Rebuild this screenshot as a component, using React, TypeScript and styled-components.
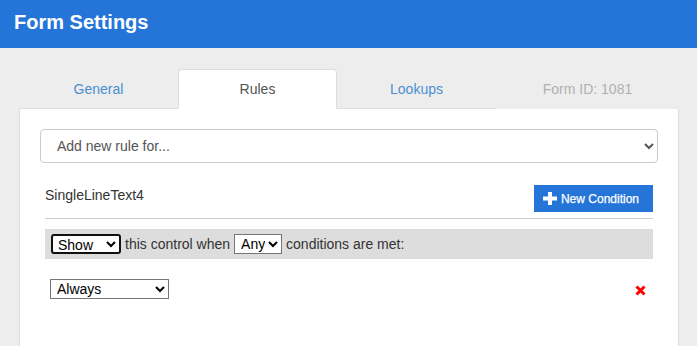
import React from 'react';
import styled, { createGlobalStyle, css } from 'styled-components';

const GlobalStyle = createGlobalStyle`
  html, body {
    margin: 0;
    padding: 0;
    background: #ededed;
    font-family: "Liberation Sans", Arial, sans-serif;
  }
  * { box-sizing: border-box; }
`;

function App() {
  return (
    <>
      <GlobalStyle />
      <Page>
        <Header>Form Settings</Header>
        <Main>
          <TabList>
            <Tab>General</Tab>
            <Tab active>Rules</Tab>
            <Tab>Lookups</Tab>
            <FormId>Form ID: 1081</FormId>
          </TabList>
          <Panel>
            <RuleSelect defaultValue="">
              <option value="">Add new rule for...</option>
            </RuleSelect>
            <Rule>
              <RuleHead>
                <FieldName>SingleLineText4</FieldName>
                <NewButton>
                  <svg width="14" height="13" viewBox="0 0 14 13">
                    <path d="M5 0h4v4.5h5v4H9V13H5V8.5H0v-4h5z" fill="#fff" />
                  </svg>
                  New Condition
                </NewButton>
              </RuleHead>
              <Divider />
              <ConditionBar>
                <SmallSelect width={70} focused defaultValue="Show">
                  <option>Show</option>
                  <option>Hide</option>
                </SmallSelect>
                <span>this control when</span>
                <SmallSelect width={48} defaultValue="Any">
                  <option>Any</option>
                  <option>All</option>
                </SmallSelect>
                <span>conditions are met:</span>
              </ConditionBar>
              <ConditionRow>
                <SmallSelect width={119} defaultValue="Always">
                  <option>Always</option>
                </SmallSelect>
                <RemoveIcon width="11" height="11" viewBox="0 0 11 11">
                  <path d="M1.5 1.5l8 8M9.5 1.5l-8 8" stroke="#f00" strokeWidth="3" />
                </RemoveIcon>
              </ConditionRow>
            </Rule>
          </Panel>
        </Main>
      </Page>
    </>
  );
}

export default App;

const blue = '#2575d9';

const Page = styled.div`
  min-height: 100vh;
  display: flex;
  flex-direction: column;
`

const Header = styled.header`
  height: 48px;
  padding: 11px 14px 0;
  background: ${blue};
  color: #fff;
  font-size: 20px;
  line-height: 22px;
  font-weight: 700;
`

const Main = styled.main`
  flex: 1;
  display: flex;
  flex-direction: column;
  padding: 21px 18px 0 19px;
`

const TabList = styled.div`
  display: grid;
  grid-template-columns: repeat(3, 159px) 1fr;
`

const Tab = styled.div<{ active?: boolean }>`
  height: 40px;
  display: flex;
  align-items: center;
  justify-content: center;
  font-size: 14px;
  line-height: 20px;
  color: #4a8fd3;
  border-bottom: 1px solid #ddd;

  ${props => props.active && css`
    color: #555;
    background: #fff;
    border: 1px solid #ddd;
    border-bottom-color: transparent;
    border-radius: 4px 4px 0 0;
  `}
`

const FormId = styled.div`
  height: 40px;
  display: flex;
  align-items: center;
  justify-content: center;
  font-size: 14px;
  color: #b0b0b0;
`

const Panel = styled.section`
  flex: 1;
  background: #fff;
  border-left: 1px solid #ddd;
  border-right: 1px solid #ddd;
  padding: 20px;
`

const RuleSelect = styled.select`
  display: block;
  width: 100%;
  height: 34px;
  padding: 0 10px 0 12px;
  border: 1px solid #ccc;
  border-radius: 4px;
  background: #fff;
  color: #555;
  font-family: inherit;
  font-size: 14px;
`

const Rule = styled.div`
  padding: 0 5px;
`

const RuleHead = styled.div`
  display: flex;
  justify-content: space-between;
  align-items: flex-start;
  margin-top: 22px;
`

const FieldName = styled.div`
  font-size: 14px;
  line-height: 20px;
  color: #333;
`

const NewButton = styled.button`
  height: 27px;
  display: flex;
  align-items: center;
  gap: 4px;
  padding: 0 14px 0 9px;
  border: none;
  background: ${blue};
  color: #fff;
  font-family: inherit;
  font-size: 12px;
  -webkit-text-stroke: 0.25px #fff;
  cursor: pointer;
`

const Divider = styled.div`
  border-top: 1px solid #ccc;
  margin: 6px 0 10px;
`

const ConditionBar = styled.div`
  height: 30px;
  display: flex;
  align-items: center;
  gap: 4px;
  padding: 0 6px;
  background: #ddd;
  color: #333;
  font-size: 14px;
`

const SmallSelect = styled.select<{ width: number; focused?: boolean }>`
  width: ${props => props.width}px;
  height: 20px;
  padding: 0 0 0 2px;
  border: 1px solid #767676;
  border-radius: 0;
  background: #fff;
  color: #000;
  font-family: inherit;
  font-size: 14px;

  ${props => props.focused && css`
    border: 2px solid #111;
    border-radius: 3px;
    padding-left: 1px;
  `}
`

const ConditionRow = styled.div`
  display: flex;
  justify-content: space-between;
  align-items: flex-start;
  margin-top: 20px;
  padding: 0 7px 0 5px;
`

const RemoveIcon = styled.svg`
  margin-top: 6px;
`
